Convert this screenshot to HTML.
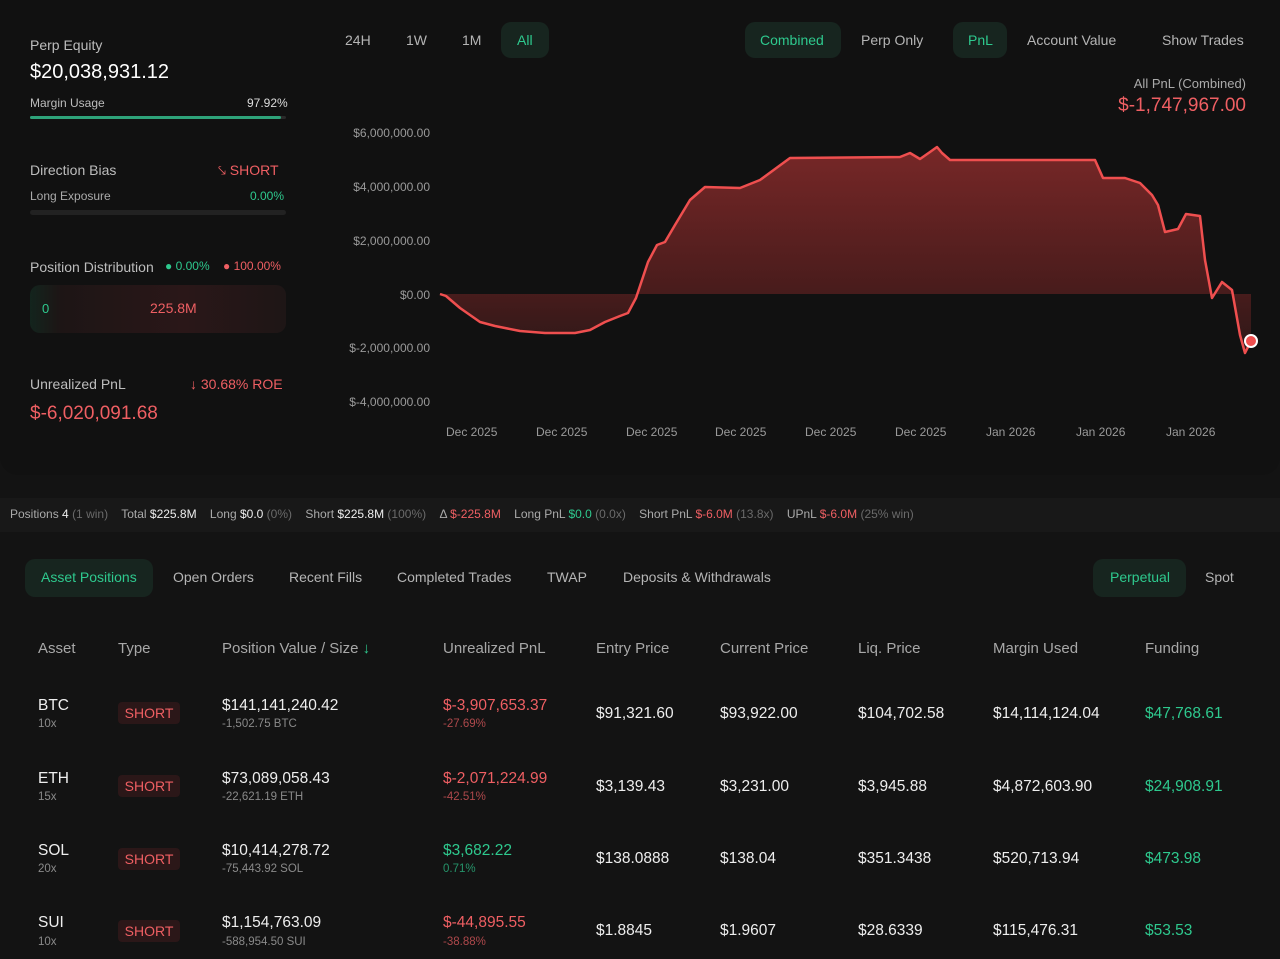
<!DOCTYPE html>
<html><head><meta charset="utf-8">
<style>
*{margin:0;padding:0;box-sizing:border-box}
body{width:1280px;height:959px;background:#131313;font-family:"Liberation Sans",sans-serif;color:#e8e8e8;position:relative;overflow:hidden}
.a{position:absolute;white-space:nowrap}
.top{position:absolute;left:0;top:0;width:1280px;height:475px;background:#111;border-radius:0 0 18px 18px}
.pill{position:absolute;height:36px;border-radius:10px;background:#17251f;}
.tab{font-size:14px;color:#b5b5b5}
.ax{font-size:12px;color:#9a9a9a}
.th{font-size:15px;color:#a8a8a8;top:640px}
.v1{font-size:15.5px;color:#eee}
.sub{font-size:11.5px;color:#8a8a8a}
.short{position:absolute;left:118px;width:62px;height:22px;background:#2b1718;border-radius:4px;color:#ef5f63;font-size:14px;text-align:center;line-height:22px}
.g,.a.g{color:#2ec98e}.r,.a.r{color:#ef5f63}.m{color:#9a9a9a}.d{color:#6a6a6a}
</style></head><body>
<div class="top"></div>
<!-- left panel -->
<div class="a" style="left:30px;top:37px;font-size:14px;color:#bdbdbd">Perp Equity</div>
<div class="a" style="left:30px;top:61px;font-size:20px;color:#fff">$20,038,931.12</div>
<div class="a" style="left:30px;top:96px;font-size:12px;color:#bdbdbd">Margin Usage</div>
<div class="a" style="left:247px;top:96px;font-size:12px;color:#ddd">97.92%</div>
<div class="a" style="left:30px;top:116px;width:256px;height:3px;background:#2a2a2a;border-radius:2px"><div style="width:98%;height:3px;background:#2ea37a;border-radius:2px"></div></div>
<div class="a" style="left:30px;top:162px;font-size:14px;color:#bdbdbd">Direction Bias</div>
<div class="a r" style="left:218px;top:162px;font-size:14px">⤥ SHORT</div>
<div class="a" style="left:30px;top:189px;font-size:12px;color:#aaa">Long Exposure</div>
<div class="a g" style="left:250px;top:189px;font-size:12px">0.00%</div>
<div class="a" style="left:30px;top:210px;width:256px;height:5px;background:#222;border-radius:3px"></div>
<div class="a" style="left:30px;top:259px;font-size:14px;color:#bdbdbd">Position Distribution</div>
<div class="a g" style="left:165px;top:259px;font-size:12px">● 0.00%</div>
<div class="a r" style="left:223px;top:259px;font-size:12px">● 100.00%</div>
<div class="a" style="left:30px;top:285px;width:256px;height:48px;border-radius:10px;background:linear-gradient(90deg,#13241d 0,#1d1515 12%,#2a1718 60%,#1e1616 100%)"></div>
<div class="a g" style="left:42px;top:301px;font-size:13px">0</div>
<div class="a r" style="left:150px;top:300px;font-size:14px">225.8M</div>
<div class="a" style="left:30px;top:376px;font-size:14px;color:#bdbdbd">Unrealized PnL</div>
<div class="a r" style="left:190px;top:376px;font-size:14px">↓ 30.68% ROE</div>
<div class="a r" style="left:30px;top:403px;font-size:19px">$-6,020,091.68</div>
<!-- chart tabs -->
<div class="pill" style="left:501px;top:22px;width:48px"></div>
<div class="pill" style="left:745px;top:22px;width:96px"></div>
<div class="pill" style="left:953px;top:22px;width:54px"></div>
<div class="a tab" style="left:345px;top:32px">24H</div>
<div class="a tab" style="left:406px;top:32px">1W</div>
<div class="a tab" style="left:462px;top:32px">1M</div>
<div class="a tab g" style="left:517px;top:32px">All</div>
<div class="a tab g" style="left:760px;top:32px">Combined</div>
<div class="a tab" style="left:861px;top:32px">Perp Only</div>
<div class="a tab g" style="left:968px;top:32px">PnL</div>
<div class="a tab" style="left:1027px;top:32px">Account Value</div>
<div class="a tab" style="left:1162px;top:32px">Show Trades</div>
<div class="a" style="right:34px;top:76px;font-size:13px;color:#aaa">All PnL (Combined)</div>
<div class="a r" style="right:34px;top:95px;font-size:19px">$-1,747,967.00</div>
<div class="a ax" style="right:850px;top:126px">$6,000,000.00</div>
<div class="a ax" style="right:850px;top:180px">$4,000,000.00</div>
<div class="a ax" style="right:850px;top:234px">$2,000,000.00</div>
<div class="a ax" style="right:850px;top:288px">$0.00</div>
<div class="a ax" style="right:850px;top:341px">$-2,000,000.00</div>
<div class="a ax" style="right:850px;top:395px">$-4,000,000.00</div>
<div class="a ax" style="left:446px;top:425px">Dec 2025</div>
<div class="a ax" style="left:536px;top:425px">Dec 2025</div>
<div class="a ax" style="left:626px;top:425px">Dec 2025</div>
<div class="a ax" style="left:715px;top:425px">Dec 2025</div>
<div class="a ax" style="left:805px;top:425px">Dec 2025</div>
<div class="a ax" style="left:895px;top:425px">Dec 2025</div>
<div class="a ax" style="left:986px;top:425px">Jan 2026</div>
<div class="a ax" style="left:1076px;top:425px">Jan 2026</div>
<div class="a ax" style="left:1166px;top:425px">Jan 2026</div>
<svg class="a" style="left:0;top:0" width="1280" height="475">
<defs><linearGradient id="f" x1="0" y1="140" x2="0" y2="350" gradientUnits="userSpaceOnUse"><stop offset="0" stop-color="#7a2828"/><stop offset="0.7" stop-color="#4a1c1c"/><stop offset="1" stop-color="#2e1818"/></linearGradient></defs>
<path d="M440,294 L446,296 L460,308 L480,322 L495,326 L520,331 L545,333 L575,333 L590,330 L605,322 L620,316 L628,313 L636,298 L648,262 L657,245 L665,242 L675,225 L690,200 L705,187 L740,188 L760,180 L790,158 L900,157 L910,153 L920,159 L930,152 L937,147 L942,153 L950,160 L1095,160 L1103,178 L1125,178 L1140,183 L1152,195 L1158,205 L1165,232 L1178,229 L1186,214 L1200,216 L1205,260 L1212,298 L1222,282 L1232,290 L1240,335 L1245,353 L1251,341 L1251,294 Z" fill="url(#f)"/>
<path d="M440,294 L446,296 L460,308 L480,322 L495,326 L520,331 L545,333 L575,333 L590,330 L605,322 L620,316 L628,313 L636,298 L648,262 L657,245 L665,242 L675,225 L690,200 L705,187 L740,188 L760,180 L790,158 L900,157 L910,153 L920,159 L930,152 L937,147 L942,153 L950,160 L1095,160 L1103,178 L1125,178 L1140,183 L1152,195 L1158,205 L1165,232 L1178,229 L1186,214 L1200,216 L1205,260 L1212,298 L1222,282 L1232,290 L1240,335 L1245,353 L1251,341" fill="none" stroke="#ef4f4f" stroke-width="2.5" stroke-linejoin="round"/>
<circle cx="1251" cy="341" r="6" fill="#ef4f4f" stroke="#fff" stroke-width="2"/>
</svg>
<!-- stats bar -->
<div class="a" style="left:0;top:498px;width:1280px;height:34px;background:#181818"></div>
<div class="a" style="left:10px;top:507px;font-size:12px;color:#aaa">Positions <span style="color:#eee">4</span> <span class="d">(1 win)</span> &nbsp;&nbsp; Total <span style="color:#eee">$225.8M</span> &nbsp;&nbsp; Long <span style="color:#eee">$0.0</span> <span class="d">(0%)</span> &nbsp;&nbsp; Short <span style="color:#eee">$225.8M</span> <span class="d">(100%)</span> &nbsp;&nbsp; Δ <span class="r">$-225.8M</span> &nbsp;&nbsp; Long PnL <span class="g">$0.0</span> <span class="d">(0.0x)</span> &nbsp;&nbsp; Short PnL <span class="r">$-6.0M</span> <span class="d">(13.8x)</span> &nbsp;&nbsp; UPnL <span class="r">$-6.0M</span> <span class="d">(25% win)</span></div>
<!-- tabs -->
<div class="pill" style="left:25px;top:559px;width:128px;height:38px"></div>
<div class="pill" style="left:1093px;top:559px;width:93px;height:38px"></div>
<div class="a tab g" style="left:41px;top:569px">Asset Positions</div>
<div class="a tab" style="left:173px;top:569px">Open Orders</div>
<div class="a tab" style="left:289px;top:569px">Recent Fills</div>
<div class="a tab" style="left:397px;top:569px">Completed Trades</div>
<div class="a tab" style="left:547px;top:569px">TWAP</div>
<div class="a tab" style="left:623px;top:569px">Deposits &amp; Withdrawals</div>
<div class="a tab g" style="left:1110px;top:569px">Perpetual</div>
<div class="a tab" style="left:1205px;top:569px">Spot</div>
<!-- table header -->
<div class="a th" style="left:38px">Asset</div>
<div class="a th" style="left:118px">Type</div>
<div class="a th" style="left:222px">Position Value / Size <span class="g">↓</span></div>
<div class="a th" style="left:443px">Unrealized PnL</div>
<div class="a th" style="left:596px">Entry Price</div>
<div class="a th" style="left:720px">Current Price</div>
<div class="a th" style="left:858px">Liq. Price</div>
<div class="a th" style="left:993px">Margin Used</div>
<div class="a th" style="left:1145px">Funding</div>
<!-- rows -->
<div class="a v1" style="left:38px;top:697px">BTC</div><div class="a sub" style="left:38px;top:718px">10x</div>
<div class="short" style="top:702px">SHORT</div>
<div class="a v1" style="left:222px;top:697px">$141,141,240.42</div><div class="a sub" style="left:222px;top:718px">-1,502.75 BTC</div>
<div class="a v1 r" style="left:443px;top:697px">$-3,907,653.37</div><div class="a sub r" style="left:443px;top:718px;opacity:.7">-27.69%</div>
<div class="a v1" style="left:596px;top:705px">$91,321.60</div><div class="a v1" style="left:720px;top:705px">$93,922.00</div><div class="a v1" style="left:858px;top:705px">$104,702.58</div><div class="a v1" style="left:993px;top:705px">$14,114,124.04</div><div class="a v1 g" style="left:1145px;top:705px">$47,768.61</div>

<div class="a v1" style="left:38px;top:770px">ETH</div><div class="a sub" style="left:38px;top:791px">15x</div>
<div class="short" style="top:775px">SHORT</div>
<div class="a v1" style="left:222px;top:770px">$73,089,058.43</div><div class="a sub" style="left:222px;top:791px">-22,621.19 ETH</div>
<div class="a v1 r" style="left:443px;top:770px">$-2,071,224.99</div><div class="a sub r" style="left:443px;top:791px;opacity:.7">-42.51%</div>
<div class="a v1" style="left:596px;top:778px">$3,139.43</div><div class="a v1" style="left:720px;top:778px">$3,231.00</div><div class="a v1" style="left:858px;top:778px">$3,945.88</div><div class="a v1" style="left:993px;top:778px">$4,872,603.90</div><div class="a v1 g" style="left:1145px;top:778px">$24,908.91</div>

<div class="a v1" style="left:38px;top:842px">SOL</div><div class="a sub" style="left:38px;top:863px">20x</div>
<div class="short" style="top:848px">SHORT</div>
<div class="a v1" style="left:222px;top:842px">$10,414,278.72</div><div class="a sub" style="left:222px;top:863px">-75,443.92 SOL</div>
<div class="a v1 g" style="left:443px;top:842px">$3,682.22</div><div class="a sub g" style="left:443px;top:863px;opacity:.7">0.71%</div>
<div class="a v1" style="left:596px;top:850px">$138.0888</div><div class="a v1" style="left:720px;top:850px">$138.04</div><div class="a v1" style="left:858px;top:850px">$351.3438</div><div class="a v1" style="left:993px;top:850px">$520,713.94</div><div class="a v1 g" style="left:1145px;top:850px">$473.98</div>

<div class="a v1" style="left:38px;top:914px">SUI</div><div class="a sub" style="left:38px;top:936px">10x</div>
<div class="short" style="top:920px">SHORT</div>
<div class="a v1" style="left:222px;top:914px">$1,154,763.09</div><div class="a sub" style="left:222px;top:936px">-588,954.50 SUI</div>
<div class="a v1 r" style="left:443px;top:914px">$-44,895.55</div><div class="a sub r" style="left:443px;top:936px;opacity:.7">-38.88%</div>
<div class="a v1" style="left:596px;top:922px">$1.8845</div><div class="a v1" style="left:720px;top:922px">$1.9607</div><div class="a v1" style="left:858px;top:922px">$28.6339</div><div class="a v1" style="left:993px;top:922px">$115,476.31</div><div class="a v1 g" style="left:1145px;top:922px">$53.53</div>
</body></html>
